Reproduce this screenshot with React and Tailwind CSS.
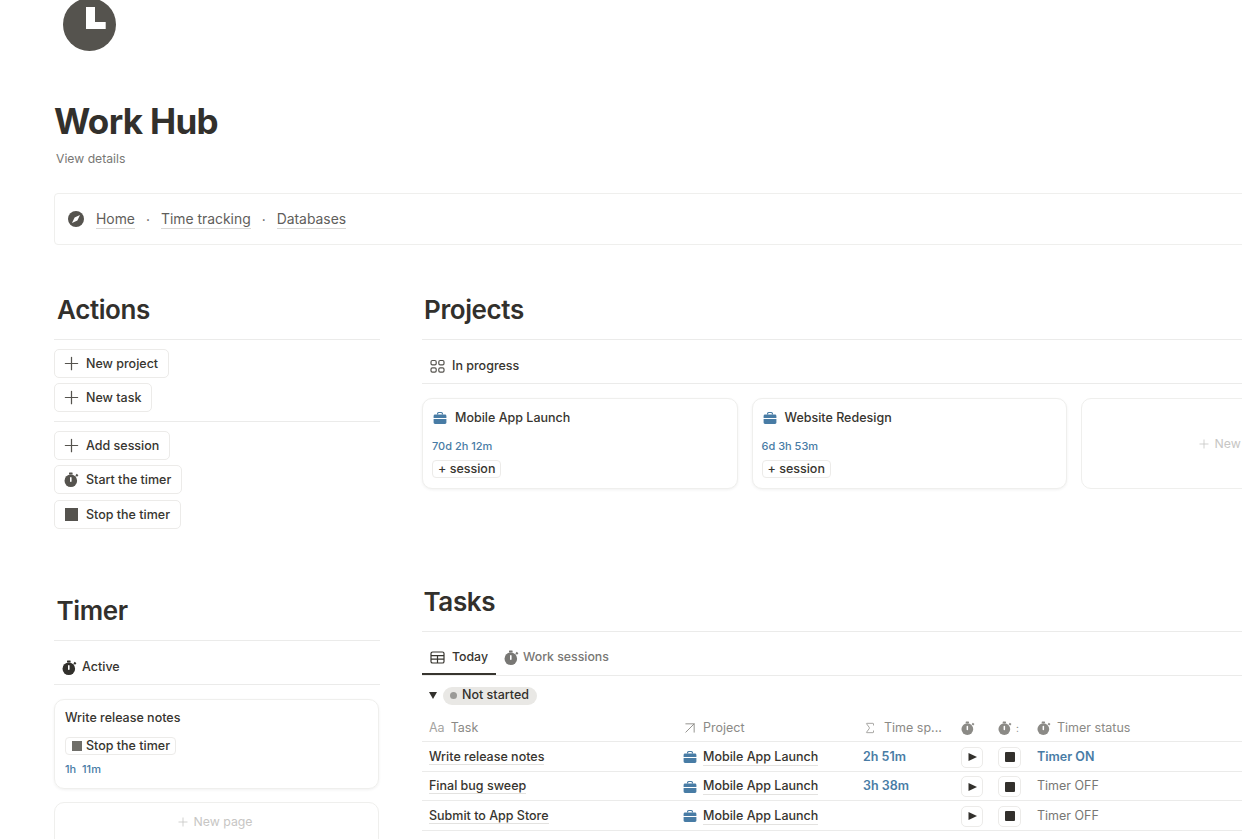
import React from 'react';
import { Plus, ArrowUpRight, Sigma } from 'lucide-react';

function Stopwatch({ size = 15, className = '' }) {
  return (
    <svg width={size} height={size} viewBox="0 0 15 15" className={`shrink-0 ${className}`} fill="currentColor">
      <circle cx="6.8" cy="8.7" r="6.3" />
      <rect x="5" y="0.6" width="3.6" height="1.8" rx="0.5" />
      <path d="M11.4 3.4 12.7 1.8l1.7 1.4-1.3 1.6z" />
      <rect x="6" y="5" width="1.6" height="5" rx="0.8" fill="#fff" />
    </svg>
  );
}

function Briefcase({ size = 14 }) {
  return (
    <svg width={size} height={size} viewBox="0 0 14 14" fill="none" className="shrink-0">
      <path d="M4.6 3.6V2.5c0-.6.4-1 1-1h2.8c.6 0 1 .4 1 1v1.1" stroke="#487ca5" strokeWidth="1.2" />
      <path d="M0.6 5c0-.8.6-1.5 1.4-1.5h10c.8 0 1.4.7 1.4 1.5v2H.6z" fill="#487ca5" />
      <path d="M.6 8h12.8v3.6c0 .8-.6 1.4-1.4 1.4H2c-.8 0-1.4-.6-1.4-1.4z" fill="#487ca5" />
    </svg>
  );
}

function PlusIcon() {
  return <Plus size={21} strokeWidth={1.4} className="shrink-0" />;
}

function ActionButton({ icon, children, className = '' }) {
  return (
    <div className={`flex h-[29px] w-fit items-center gap-[7px] rounded-[5px] border border-[#ecebe9] bg-white pl-[9px] pr-[10px] text-[12.5px] font-medium text-[#37352f] ${className}`}>
      <span className="flex w-[15px] items-center justify-center text-[#55534e]">{icon}</span>
      <span className="pt-[1px]">{children}</span>
    </div>
  );
}

function Heading({ children, className = '', textClass = 'pl-[3px]' }) {
  return (
    <div className={`h-[50px] border-b border-[#ebebea] ${className}`}>
      <h2 className={`pt-[1px] text-[26px] font-semibold leading-[38px] tracking-[-0.015em] text-[#32302c] ${textClass}`}>{children}</h2>
    </div>
  );
}

function ProjectCard({ name, time }) {
  return (
    <div className="h-[91px] w-[315.5px] shrink-0 rounded-[10px] border border-[#efefed] bg-white pl-[9px] pt-[11px] shadow-[0_1px_3px_rgba(0,0,0,0.06)]">
      <div className="flex items-center gap-[8px] pl-[1px] text-[12.5px] font-medium leading-[16px] text-[#37352f]">
        <Briefcase />
        {name}
      </div>
      <div className="mt-[13px] text-[11px] font-medium leading-[14px] text-[#487ca5]">{time}</div>
      <div className="mt-[7px] flex h-[18px] w-fit items-center rounded-[4px] border border-[#ecebe9] px-[5px] text-[12.5px] font-medium text-[#37352f]">+ session</div>
    </div>
  );
}

const tasks = [
  { name: 'Write release notes', time: '2h 51m', on: true },
  { name: 'Final bug sweep', time: '3h 38m', on: false },
  { name: 'Submit to App Store', time: '', on: false },
];

const tableCols = 'grid grid-cols-[254px_180px_98px_37px_39px_212px]';

function TaskRow({ task }) {
  return (
    <div className={`${tableCols} h-[29.5px] items-center border-b border-[#ebebea] pt-[2px] text-[12.5px] font-medium text-[#37352f]`}>
      <div className="pl-[7px]">
        <span className="border-b border-[#e3e2e0] leading-[16px]">{task.name}</span>
      </div>
      <div className="flex items-center gap-[6px] pl-[7px]">
        <Briefcase />
        <span className="border-b border-[#e3e2e0] leading-[16px]">Mobile App Launch</span>
      </div>
      <div className="pl-[7px] font-semibold text-[#487ca5]">{task.time}</div>
      <div className="pl-[7px]">
        <div className="flex h-[21px] w-[22px] items-center justify-center rounded-[5px] border border-[#ecebe9]">
          <svg width="9" height="8" viewBox="0 0 9 8"><path d="M0.5 0 9 4 0.5 8z" fill="#32302c" /></svg>
        </div>
      </div>
      <div className="pl-[7px]">
        <div className="flex h-[21px] w-[23px] items-center justify-center rounded-[5px] border border-[#ecebe9]">
          <span className="h-[10px] w-[10px] rounded-[1px] bg-[#32302c]" />
        </div>
      </div>
      <div className={task.on ? 'pl-[7px] font-semibold text-[#487ca5]' : 'pl-[7px] font-normal text-[#787774]'}>
        {task.on ? 'Timer ON' : 'Timer OFF'}
      </div>
    </div>
  );
}

export default function App() {
  return (
    <div className="h-[839px] w-[1242px] overflow-hidden bg-white pl-[54px] font-['Inter',sans-serif] text-[#37352f]">
      {/* page icon runs off the top of the window */}
      <svg width="53" height="53" viewBox="0 0 53 53" className="ml-[9px] -mt-[2px] block">
        <circle cx="26.5" cy="26.5" r="26.5" fill="#55534e" />
        <path d="M23 9h9v15h10.7v7H23z" fill="#fff" />
      </svg>

      <h1 className="mt-[48px] text-[35px] font-bold leading-[44px] tracking-[-0.02em] text-[#32302c]">Work Hub</h1>
      <div className="mt-[7px] pl-[2px] text-[12.2px] leading-[18px] text-[#787774]">View details</div>

      <div className="mt-[25px] flex h-[52px] w-[1300px] items-center rounded-[4px] border border-[#efefed] pl-[13px] pt-[2px] text-[13.9px] text-[#5f5e5b]">
        <svg width="16" height="16" viewBox="0 0 16 16" className="mr-[12px] -mt-[2px]">
          <circle cx="8" cy="8" r="8" fill="#55534e" />
          <path d="M12 4 9.4 9.4 4 12l2.6-5.4z" fill="#fff" />
        </svg>
        <span className="border-b border-[#d9d8d6] leading-[17px]">Home</span>
        <span className="mx-[11px]">·</span>
        <span className="border-b border-[#d9d8d6] leading-[17px]">Time tracking</span>
        <span className="mx-[11px]">·</span>
        <span className="border-b border-[#d9d8d6] leading-[17px]">Databases</span>
      </div>

      <div className="mt-[45px] flex gap-[42px]">
        {/* left column */}
        <div className="w-[326px] shrink-0">
          <Heading>Actions</Heading>
          <div className="mt-[9px] flex flex-col gap-[5px]">
            <ActionButton icon={<PlusIcon />}>New project</ActionButton>
            <ActionButton icon={<PlusIcon />}>New task</ActionButton>
          </div>
          <div className="my-[9px] border-b border-[#ebebea]" />
          <div className="flex flex-col gap-[5px]">
            <ActionButton icon={<PlusIcon />}>Add session</ActionButton>
            <ActionButton icon={<Stopwatch />}>Start the timer</ActionButton>
            <ActionButton className="mt-[1px]" icon={<span className="block h-[13px] w-[13px] bg-[#55534e]" />}>Stop the timer</ActionButton>
          </div>

          <Heading className="mt-[62px]" textClass="pl-[2.5px]">Timer</Heading>
          <div className="flex h-[44px] items-center gap-[5px] border-b border-[#ebebea] pl-[8px] pt-[10px] text-[12.5px] font-medium text-[#37352f]">
            <Stopwatch className="text-[#32302c]" />
            Active
          </div>
          <div className="mt-[14px] h-[90px] w-[325px] rounded-[10px] border border-[#efefed] pl-[10px] pt-[10px] shadow-[0_1px_3px_rgba(0,0,0,0.06)]">
            <div className="text-[12.5px] font-medium leading-[16px]">Write release notes</div>
            <div className="mt-[11px] flex h-[18px] w-fit items-center gap-[4px] rounded-[4px] border border-[#ecebe9] pl-[6px] pr-[5px] text-[12.5px] font-medium">
              <span className="h-[10px] w-[10px] bg-[#6f6e69]" />
              Stop the timer
            </div>
            <div className="mt-[7px] text-[11px] font-medium leading-[14px] text-[#487ca5]">1h&nbsp; 11m</div>
          </div>
          <div className="mt-[13px] flex h-[60px] w-[325px] justify-center gap-[4px] rounded-[10px] border border-[#efefed] pr-[5px] pt-[11px] text-[12.3px] leading-[16px] text-[#c7c6c4]">
            <Plus size={14} strokeWidth={1.4} className="mt-[1px]" />
            New page
          </div>
        </div>

        {/* right column */}
        <div className="w-[900px] shrink-0">
          <Heading textClass="pl-[2px]">Projects</Heading>
          <div className="flex h-[44px] items-center gap-[7px] border-b border-[#ebebea] pl-[8px] pt-[10px] text-[12.5px] font-medium text-[#37352f]">
            <svg width="15" height="15" viewBox="0 0 15 15" fill="none" stroke="#55534e" strokeWidth="1.2">
              <rect x="1" y="1.5" width="5.2" height="4.4" rx="1.4" />
              <rect x="8.8" y="1.5" width="5.2" height="4.4" rx="1.4" />
              <rect x="1" y="8.8" width="5.2" height="4.4" rx="1.4" />
              <rect x="8.8" y="8.8" width="5.2" height="4.4" rx="1.4" />
            </svg>
            In progress
          </div>
          <div className="mt-[14px] flex gap-[14px]">
            <ProjectCard name="Mobile App Launch" time="70d 2h 12m" />
            <ProjectCard name="Website Redesign" time="6d 3h 53m" />
            <div className="flex h-[91px] w-[316px] shrink-0 items-center justify-center gap-[4px] rounded-[10px] border border-[#efefed] pr-[8px] pt-[1px] text-[12.3px] text-[#c7c6c4]">
              <Plus size={14} strokeWidth={1.4} />
              New page
            </div>
          </div>

          <Heading className="mt-[93px]" textClass="pl-[1.5px]">Tasks</Heading>
          <div className="flex h-[44px] items-end border-b border-[#ebebea] text-[12.3px] font-medium">
            <div className="flex h-[43px] w-[74px] items-center gap-[7px] border-b-2 border-[#37352f] pl-[8px] pt-[10px]">
              <svg width="15" height="13" viewBox="0 0 15 13" fill="none" stroke="#37352f" strokeWidth="1.2">
                <rect x="1" y="1" width="13" height="11" rx="1.6" />
                <path d="M1 4.6h13M1 8.2h13M7.5 4.6V12" />
              </svg>
              Today
            </div>
            <div className="ml-[8px] flex h-[43px] items-center gap-[4px] pt-[8px] text-[#787774]">
              <Stopwatch />
              Work sessions
            </div>
          </div>
          <div className="flex h-[37px] items-center pl-[7px] pt-[2px]">
            <svg width="8" height="7" viewBox="0 0 8 7"><path d="M0 0h8L4 7z" fill="#32302c" /></svg>
            <div className="ml-[6px] flex h-[18px] items-center gap-[5px] rounded-full bg-[#e9e8e5] pl-[7px] pr-[8px] text-[12.5px] font-medium text-[#32302c]">
              <span className="h-[7px] w-[7px] rounded-full bg-[#9b9a97]" />
              Not started
            </div>
          </div>
          <div className={`${tableCols} h-[29px] items-center border-b border-[#ebebea] pt-[2px] text-[12.5px] text-[#8b8a86]`}>
            <div className="flex items-center gap-[6px] pl-[7px]"><span className="text-[#a5a4a1]">Aa</span>Task</div>
            <div className="flex items-center gap-[3px] pl-[7px]"><ArrowUpRight size={20} strokeWidth={1.1} className="-ml-[3px] shrink-0" />Project</div>
            <div className="flex items-center gap-[7px] pl-[7px]"><Sigma size={14} strokeWidth={1.3} />Time sp...</div>
            <div className="pl-[7px]"><Stopwatch size={14} /></div>
            <div className="flex items-center gap-[4px] pl-[7px]"><Stopwatch size={14} /><span className="text-[10px] leading-none">:</span></div>
            <div className="flex items-center gap-[6px] pl-[7px]"><Stopwatch size={14} />Timer status</div>
          </div>
          {tasks.map((task) => <TaskRow key={task.name} task={task} />)}
        </div>
      </div>
    </div>
  );
}
